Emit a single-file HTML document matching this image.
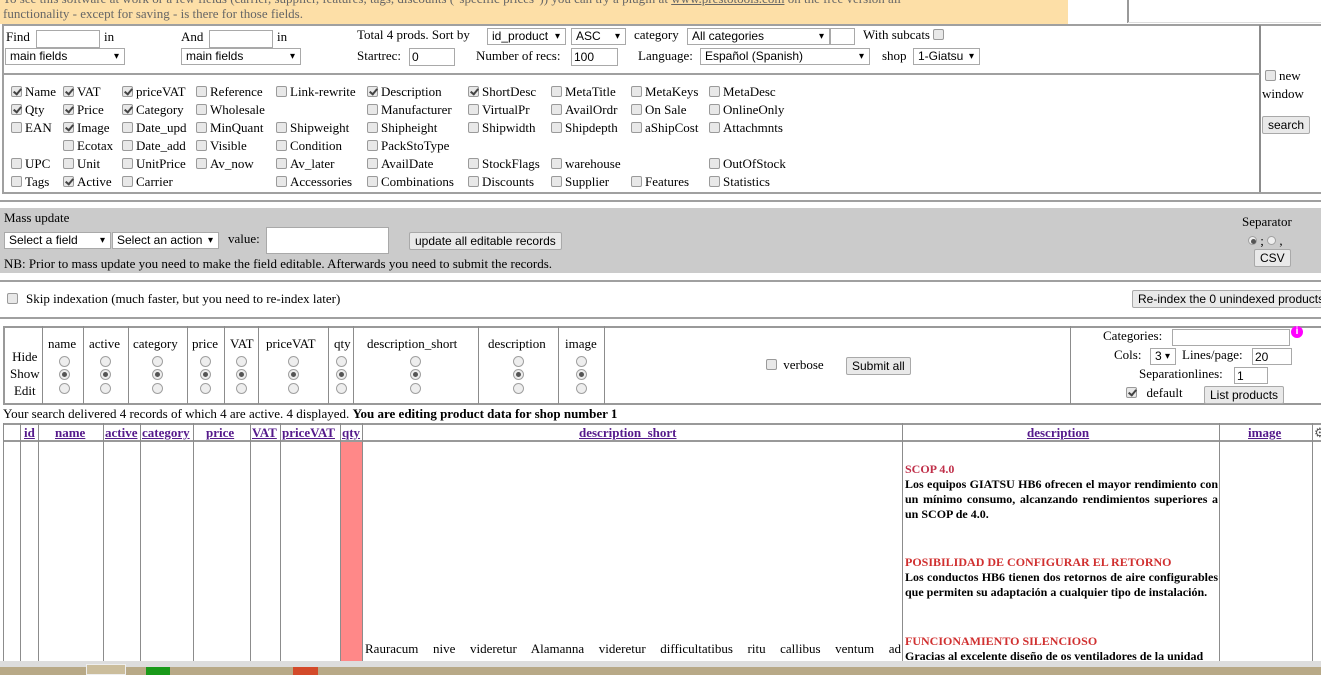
<!DOCTYPE html>
<html><head><meta charset="utf-8">
<style>
*{box-sizing:border-box}
body{margin:0;width:1321px;height:675px;overflow:hidden;position:relative;font-family:"Liberation Serif",serif;font-size:13px;color:#000;background:#fff}
.a{position:absolute;white-space:nowrap}
.cb{display:inline-block;width:11px;height:11px;border:1px solid #9a9a9a;border-radius:2px;background:#e8e8e8;vertical-align:-1px;margin-right:3px;position:relative}
.cb.c::after{content:"";position:absolute;left:3px;top:0px;width:3px;height:6px;border:solid #444;border-width:0 2px 2px 0;transform:rotate(40deg)}
.rd{display:inline-block;width:11px;height:11px;border:1px solid #a0a0a0;border-radius:50%;background:#eee;position:relative}
.rd.c::after{content:"";position:absolute;left:2px;top:2px;width:5px;height:5px;border-radius:50%;background:#555}
.sel{position:absolute;height:17px;border:1px solid #a9a9a9;background:#fff;font-family:"Liberation Sans",sans-serif;font-size:12px;padding:0 4px;line-height:15px;white-space:nowrap}
.sel::after{content:"▾";position:absolute;right:5px;top:0;font-size:10px}
.inp{position:absolute;height:18px;border:1px solid #a9a9a9;background:#fff;font-family:"Liberation Sans",sans-serif;font-size:12px;padding:0 2px;line-height:16px}
.btn{position:absolute;height:18px;border:1px solid #a9a9a9;background:#e9e9e9;font-family:"Liberation Sans",sans-serif;font-size:12px;padding:0 5px;line-height:16px;white-space:nowrap;border-radius:2px}
.hl{position:absolute;height:2px;background:#a0a0a0}
.vl{position:absolute;width:1px;background:#8c8c8c}
a{color:#551a8b;font-weight:bold}
</style></head><body>
<div class="a" style="left:0;top:0;width:1068px;height:24px;background:#fddfa7"></div>
<div class="a" style="left:3px;top:-9px;color:#666;font-size:13px">To see this software at work or a few fields (carrier, supplier, features, tags, discounts ("specific prices")) you can try a plugin at <u>www.prestotools.com</u> on the free version all</div>
<div class="a" style="left:3px;top:6px;color:#666">functionality - except for saving - is there for those fields.</div>
<div class="a" style="left:1127px;top:0;width:2px;height:23px;background:#999"></div>
<div class="a" style="left:1128px;top:22px;width:193px;height:1px;background:#ddd"></div>
<div class="hl" style="left:2px;top:24px;width:1319px"></div>
<div class="a" style="left:2px;top:24px;width:2px;height:170px;background:#a0a0a0"></div>
<div class="a" style="left:1259px;top:25px;height:168px;width:2px;background:#8c8c8c"></div>
<div class="hl" style="left:2px;top:73px;width:1258px"></div>
<div class="hl" style="left:2px;top:192px;width:1319px"></div>
<div class="a" style="left:6px;top:29px">Find</div><div class="inp" style="left:36px;top:30px;width:64px"></div><div class="a" style="left:104px;top:29px">in</div>
<div class="sel" style="left:5px;top:48px;width:120px">main fields</div>
<div class="a" style="left:181px;top:29px">And</div><div class="inp" style="left:209px;top:30px;width:64px"></div><div class="a" style="left:277px;top:29px">in</div>
<div class="sel" style="left:181px;top:48px;width:120px">main fields</div>
<div class="a" style="left:357px;top:27px">Total 4 prods. Sort by</div>
<div class="sel" style="left:487px;top:28px;width:79px">id_product</div>
<div class="sel" style="left:571px;top:28px;width:55px">ASC</div>
<div class="a" style="left:634px;top:27px">category</div>
<div class="sel" style="left:687px;top:28px;width:143px">All categories</div>
<div class="inp" style="left:830px;top:28px;width:25px;height:17px"></div>
<div class="a" style="left:863px;top:27px">With subcats <span class="cb"></span></div>
<div class="a" style="left:357px;top:48px">Startrec:</div><div class="inp" style="left:409px;top:48px;width:46px">0</div>
<div class="a" style="left:476px;top:48px">Number of recs:</div><div class="inp" style="left:571px;top:48px;width:47px">100</div>
<div class="a" style="left:638px;top:48px">Language:</div>
<div class="sel" style="left:700px;top:48px;width:170px">Español (Spanish)</div>
<div class="a" style="left:882px;top:48px">shop</div>
<div class="sel" style="left:913px;top:48px;width:67px">1-Giatsu</div>
<div class="a" style="left:1265px;top:68px"><span class="cb"></span>new</div>
<div class="a" style="left:1262px;top:86px">window</div>
<div class="btn" style="left:1262px;top:116px">search</div>
<div style="position:absolute;left:0;top:84px">
<div class="a" style="left:11px;top:0"><span class="cb c"></span>Name</div><div class="a" style="left:63px;top:0"><span class="cb c"></span>VAT</div><div class="a" style="left:122px;top:0"><span class="cb c"></span>priceVAT</div><div class="a" style="left:196px;top:0"><span class="cb"></span>Reference</div><div class="a" style="left:276px;top:0"><span class="cb"></span>Link-rewrite</div><div class="a" style="left:367px;top:0"><span class="cb c"></span>Description</div><div class="a" style="left:468px;top:0"><span class="cb c"></span>ShortDesc</div><div class="a" style="left:551px;top:0"><span class="cb"></span>MetaTitle</div><div class="a" style="left:631px;top:0"><span class="cb"></span>MetaKeys</div><div class="a" style="left:709px;top:0"><span class="cb"></span>MetaDesc</div>
<div class="a" style="left:11px;top:18px"><span class="cb c"></span>Qty</div><div class="a" style="left:63px;top:18px"><span class="cb c"></span>Price</div><div class="a" style="left:122px;top:18px"><span class="cb c"></span>Category</div><div class="a" style="left:196px;top:18px"><span class="cb"></span>Wholesale</div><div class="a" style="left:367px;top:18px"><span class="cb"></span>Manufacturer</div><div class="a" style="left:468px;top:18px"><span class="cb"></span>VirtualPr</div><div class="a" style="left:551px;top:18px"><span class="cb"></span>AvailOrdr</div><div class="a" style="left:631px;top:18px"><span class="cb"></span>On Sale</div><div class="a" style="left:709px;top:18px"><span class="cb"></span>OnlineOnly</div>
<div class="a" style="left:11px;top:36px"><span class="cb"></span>EAN</div><div class="a" style="left:63px;top:36px"><span class="cb c"></span>Image</div><div class="a" style="left:122px;top:36px"><span class="cb"></span>Date_upd</div><div class="a" style="left:196px;top:36px"><span class="cb"></span>MinQuant</div><div class="a" style="left:276px;top:36px"><span class="cb"></span>Shipweight</div><div class="a" style="left:367px;top:36px"><span class="cb"></span>Shipheight</div><div class="a" style="left:468px;top:36px"><span class="cb"></span>Shipwidth</div><div class="a" style="left:551px;top:36px"><span class="cb"></span>Shipdepth</div><div class="a" style="left:631px;top:36px"><span class="cb"></span>aShipCost</div><div class="a" style="left:709px;top:36px"><span class="cb"></span>Attachmnts</div>
<div class="a" style="left:63px;top:54px"><span class="cb"></span>Ecotax</div><div class="a" style="left:122px;top:54px"><span class="cb"></span>Date_add</div><div class="a" style="left:196px;top:54px"><span class="cb"></span>Visible</div><div class="a" style="left:276px;top:54px"><span class="cb"></span>Condition</div><div class="a" style="left:367px;top:54px"><span class="cb"></span>PackStoType</div>
<div class="a" style="left:11px;top:72px"><span class="cb"></span>UPC</div><div class="a" style="left:63px;top:72px"><span class="cb"></span>Unit</div><div class="a" style="left:122px;top:72px"><span class="cb"></span>UnitPrice</div><div class="a" style="left:196px;top:72px"><span class="cb"></span>Av_now</div><div class="a" style="left:276px;top:72px"><span class="cb"></span>Av_later</div><div class="a" style="left:367px;top:72px"><span class="cb"></span>AvailDate</div><div class="a" style="left:468px;top:72px"><span class="cb"></span>StockFlags</div><div class="a" style="left:551px;top:72px"><span class="cb"></span>warehouse</div><div class="a" style="left:709px;top:72px"><span class="cb"></span>OutOfStock</div>
<div class="a" style="left:11px;top:90px"><span class="cb"></span>Tags</div><div class="a" style="left:63px;top:90px"><span class="cb c"></span>Active</div><div class="a" style="left:122px;top:90px"><span class="cb"></span>Carrier</div><div class="a" style="left:276px;top:90px"><span class="cb"></span>Accessories</div><div class="a" style="left:367px;top:90px"><span class="cb"></span>Combinations</div><div class="a" style="left:468px;top:90px"><span class="cb"></span>Discounts</div><div class="a" style="left:551px;top:90px"><span class="cb"></span>Supplier</div><div class="a" style="left:631px;top:90px"><span class="cb"></span>Features</div><div class="a" style="left:709px;top:90px"><span class="cb"></span>Statistics</div>
</div>
<div class="hl" style="left:0;top:200px;width:1321px"></div>
<div class="a" style="left:0;top:208px;width:1321px;height:65px;background:#cbcbcb"></div>
<div class="a" style="left:4px;top:210px">Mass update</div>
<div class="sel" style="left:4px;top:232px;width:107px">Select a field</div>
<div class="sel" style="left:112px;top:232px;width:107px">Select an action</div>
<div class="a" style="left:228px;top:231px">value:</div>
<div class="inp" style="left:266px;top:227px;width:123px;height:27px"></div>
<div class="btn" style="left:409px;top:232px">update all editable records</div>
<div class="a" style="left:4px;top:256px">NB: Prior to mass update you need to make the field editable. Afterwards you need to submit the records.</div>
<div class="a" style="left:1242px;top:214px">Separator</div>
<div class="a" style="left:1248px;top:233px"><span class="rd c" style="width:9px;height:9px"></span> ; <span class="rd" style="width:9px;height:9px"></span> ,</div>
<div class="btn" style="left:1254px;top:249px">CSV</div>
<div class="hl" style="left:0;top:280px;width:1321px"></div>
<div class="a" style="left:7px;top:291px"><span class="cb" style="margin-right:8px"></span>Skip indexation (much faster, but you need to re-index later)</div>
<div class="btn" style="left:1132px;top:290px;width:200px">Re-index the 0 unindexed products</div>
<div class="hl" style="left:0;top:317px;width:1321px"></div>
<div class="a" style="left:3px;top:326px;width:1318px;height:79px;border:2px solid #999;border-right:none"></div>
<div class="vl" style="left:42px;top:326px;height:78px"></div><div class="vl" style="left:83px;top:326px;height:78px"></div><div class="vl" style="left:128px;top:326px;height:78px"></div><div class="vl" style="left:187px;top:326px;height:78px"></div><div class="vl" style="left:224px;top:326px;height:78px"></div><div class="vl" style="left:258px;top:326px;height:78px"></div><div class="vl" style="left:328px;top:326px;height:78px"></div><div class="vl" style="left:353px;top:326px;height:78px"></div><div class="vl" style="left:478px;top:326px;height:78px"></div><div class="vl" style="left:558px;top:326px;height:78px"></div><div class="vl" style="left:604px;top:326px;height:78px"></div><div class="vl" style="left:1070px;top:326px;height:78px"></div>
<div class="a" style="left:10px;top:348px;line-height:17px;text-align:center">Hide<br>Show<br>Edit</div>
<div style="position:absolute;top:336px;left:0">
<div class="a" style="left:48px">name</div><div class="a" style="left:89px">active</div><div class="a" style="left:133px">category</div><div class="a" style="left:192px">price</div><div class="a" style="left:230px">VAT</div><div class="a" style="left:266px">priceVAT</div><div class="a" style="left:334px">qty</div><div class="a" style="left:367px">description_short</div><div class="a" style="left:488px">description</div><div class="a" style="left:565px">image</div>
</div>
<div style="position:absolute;left:0;top:0">
<div class="a" style="left:59px;top:355px"><span class="rd"></span></div><div class="a" style="left:59px;top:368px"><span class="rd c"></span></div><div class="a" style="left:59px;top:382px"><span class="rd"></span></div>
<div class="a" style="left:100px;top:355px"><span class="rd"></span></div><div class="a" style="left:100px;top:368px"><span class="rd c"></span></div><div class="a" style="left:100px;top:382px"><span class="rd"></span></div>
<div class="a" style="left:152px;top:355px"><span class="rd"></span></div><div class="a" style="left:152px;top:368px"><span class="rd c"></span></div><div class="a" style="left:152px;top:382px"><span class="rd"></span></div>
<div class="a" style="left:200px;top:355px"><span class="rd"></span></div><div class="a" style="left:200px;top:368px"><span class="rd c"></span></div><div class="a" style="left:200px;top:382px"><span class="rd"></span></div>
<div class="a" style="left:236px;top:355px"><span class="rd"></span></div><div class="a" style="left:236px;top:368px"><span class="rd c"></span></div><div class="a" style="left:236px;top:382px"><span class="rd"></span></div>
<div class="a" style="left:288px;top:355px"><span class="rd"></span></div><div class="a" style="left:288px;top:368px"><span class="rd c"></span></div><div class="a" style="left:288px;top:382px"><span class="rd"></span></div>
<div class="a" style="left:336px;top:355px"><span class="rd"></span></div><div class="a" style="left:336px;top:368px"><span class="rd c"></span></div><div class="a" style="left:336px;top:382px"><span class="rd"></span></div>
<div class="a" style="left:410px;top:355px"><span class="rd"></span></div><div class="a" style="left:410px;top:368px"><span class="rd c"></span></div><div class="a" style="left:410px;top:382px"><span class="rd"></span></div>
<div class="a" style="left:513px;top:355px"><span class="rd"></span></div><div class="a" style="left:513px;top:368px"><span class="rd c"></span></div><div class="a" style="left:513px;top:382px"><span class="rd"></span></div>
<div class="a" style="left:576px;top:355px"><span class="rd"></span></div><div class="a" style="left:576px;top:368px"><span class="rd c"></span></div><div class="a" style="left:576px;top:382px"><span class="rd"></span></div>
</div>
<div class="a" style="left:766px;top:357px"><span class="cb"></span> verbose</div>
<div class="btn" style="left:846px;top:357px">Submit all</div>
<div class="a" style="left:1103px;top:328px">Categories:</div><div class="inp" style="left:1172px;top:329px;width:118px;height:17px"></div>
<div class="a" style="left:1291px;top:326px;width:12px;height:12px;border-radius:50%;background:#f0f;color:#fff;font-size:10px;font-weight:bold;text-align:center;line-height:12px;font-family:'Liberation Sans',sans-serif">i</div>
<div class="a" style="left:1114px;top:347px">Cols:</div><div class="sel" style="left:1150px;top:348px;width:26px">3</div><div class="a" style="left:1182px;top:347px">Lines/page:</div><div class="inp" style="left:1252px;top:348px;width:40px;height:17px">20</div>
<div class="a" style="left:1139px;top:366px">Separationlines:</div><div class="inp" style="left:1234px;top:367px;width:34px;height:17px">1</div>
<div class="a" style="left:1126px;top:385px"><span class="cb c"></span> &nbsp;default</div>
<div class="btn" style="left:1204px;top:386px">List products</div>
<div class="a" style="left:3px;top:406px">Your search delivered 4 records of which 4 are active. 4 displayed. <b>You are editing product data for shop number 1</b></div>
<div class="a" style="left:3px;top:423px;width:1318px;height:2px;background:#999"></div>
<div class="a" style="left:3px;top:440px;width:1318px;height:2px;background:#999"></div>
<div class="a" style="left:341px;top:442px;width:21px;height:230px;background:#ff8888"></div>
<div class="vl" style="left:3px;top:423px;height:252px"></div><div class="vl" style="left:20px;top:423px;height:252px"></div><div class="vl" style="left:38px;top:423px;height:252px"></div><div class="vl" style="left:103px;top:423px;height:252px"></div><div class="vl" style="left:140px;top:423px;height:252px"></div><div class="vl" style="left:193px;top:423px;height:252px"></div><div class="vl" style="left:250px;top:423px;height:252px"></div><div class="vl" style="left:280px;top:423px;height:252px"></div><div class="vl" style="left:340px;top:423px;height:252px"></div><div class="vl" style="left:362px;top:423px;height:252px"></div><div class="vl" style="left:902px;top:423px;height:252px"></div><div class="vl" style="left:1219px;top:423px;height:252px"></div><div class="vl" style="left:1312px;top:423px;height:252px"></div>
<div style="position:absolute;top:425px;left:0">
<div class="a" style="left:24px"><a><u>id</u></a></div><div class="a" style="left:55px"><a><u>name</u></a></div><div class="a" style="left:105px"><a><u>active</u></a></div><div class="a" style="left:142px"><a><u>category</u></a></div><div class="a" style="left:206px"><a><u>price</u></a></div><div class="a" style="left:252px"><a><u>VAT</u></a></div><div class="a" style="left:282px"><a><u>priceVAT</u></a></div><div class="a" style="left:342px"><a><u>qty</u></a></div><div class="a" style="left:579px"><a><u>description_short</u></a></div><div class="a" style="left:1027px"><a><u>description</u></a></div><div class="a" style="left:1248px"><a><u>image</u></a></div><div class="a" style="left:1314px;color:#555">⚙</div>
</div>
<div class="a" style="left:365px;top:641px;width:536px;text-align:justify;text-align-last:justify">Rauracum nive videretur Alamanna videretur difficultatibus ritu callibus ventum ad</div>
<div class="a" style="left:905px;top:462px;width:313px;white-space:normal;font-size:12px;font-weight:bold;line-height:15px;text-align:justify">
<div style="color:#c0304a">SCOP 4.0</div>
<div>Los equipos GIATSU HB6 ofrecen el mayor rendimiento con un mínimo consumo, alcanzando rendimientos superiores a un SCOP de 4.0.</div>
<div style="height:33px"></div>
<div style="color:#d03030">POSIBILIDAD DE CONFIGURAR EL RETORNO</div>
<div>Los conductos HB6 tienen dos retornos de aire configurables que permiten su adaptación a cualquier tipo de instalación.</div>
<div style="height:34px"></div>
<div style="color:#d03030">FUNCIONAMIENTO SILENCIOSO</div>
<div>Gracias al excelente diseño de os ventiladores de la unidad</div>
</div>
<div class="a" style="left:0;top:661px;width:1321px;height:14px;background:#ddd"></div>
<div class="a" style="left:0;top:667px;width:1321px;height:8px;background:#b8a987"></div>
<div class="a" style="left:86px;top:664px;width:40px;height:11px;background:#cbbd9c;border:1px solid #eee"></div>
<div class="a" style="left:146px;top:667px;width:24px;height:8px;background:#1a9a1a"></div>
<div class="a" style="left:293px;top:667px;width:25px;height:8px;background:#d34a2a"></div>
</body></html>
